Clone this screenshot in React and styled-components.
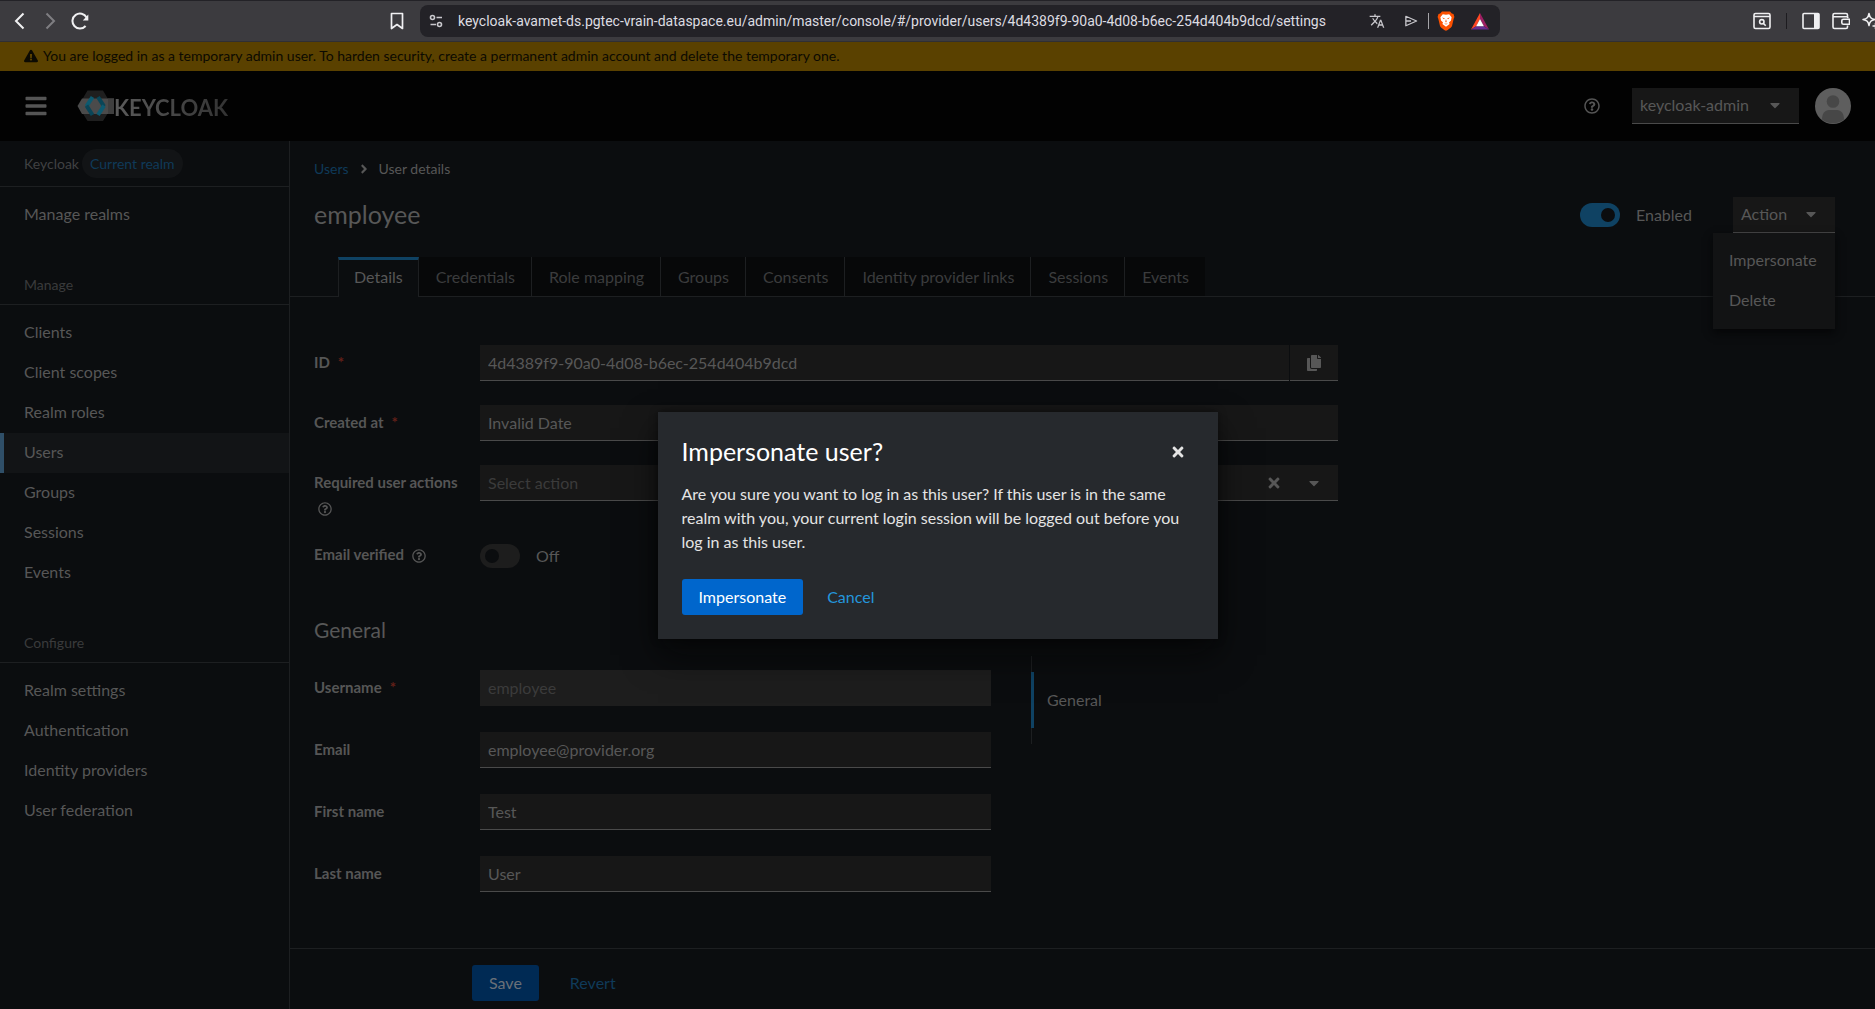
import React from 'react';
import styled, { createGlobalStyle } from 'styled-components';
import {
  FaExclamationTriangle,
  FaBars,
  FaAngleRight,
  FaCaretDown,
  FaTimes,
  FaCopy,
  FaRegQuestionCircle,
} from 'react-icons/fa';
import { MdTranslate } from 'react-icons/md';

const GlobalStyle = createGlobalStyle`
* {
  box-sizing: border-box;
}

body {
  margin: 0;
  background: #0b0d0f;
  color: #575757;
  font-family: Lato, "Open Sans", sans-serif;
  font-size: 16px;
  line-height: 24px;
}

button, input {
  font: inherit;
  color: inherit;
  border: 0;
  padding: 0;
  margin: 0;
  border-radius: 0;
  background: none;
}

a {
  text-decoration: none;
  color: inherit;
}

svg {
  display: block;
  flex: none;
}
`;

const Screen = styled.div`
  min-height: 100vh;
  display: flex;
  flex-direction: column;
`;

/* browser bar */

const BrowserBar = styled.div`
  height: 42px;
  display: flex;
  align-items: center;
  background: #3c3b3f;
  border-top: 1px solid #232227;
  border-bottom: 1px solid #302f33;
  overflow: hidden;
`;

const BarLeft = styled.div`
  flex: 1;
  display: flex;
  align-items: center;
  padding: 0 8px 0 5px;
`;

const BarRight = styled.div`
  flex: none;
  width: 386px;
  margin-right: -11px;
  display: flex;
  align-items: center;
  justify-content: flex-end;
`;

const BarButton = styled.button`
  width: 30px;
  height: 30px;
  display: flex;
  align-items: center;
  justify-content: center;
  flex: none;
  color: ${props => props.$dim ? '#7f7e82' : '#f0f0f2'};
  margin-left: ${props => props.$push ? 'auto' : '0'};
`;

const UrlBox = styled.div`
  flex: 0 1 1080px;
  height: 32px;
  display: flex;
  align-items: center;
  padding: 0 3px 0 8px;
  border-radius: 8px;
  background: #232227;
  color: #c9c8cd;
`;

const UrlInput = styled.input`
  flex: 1;
  min-width: 0;
  margin-left: 14px;
  font-family: Roboto, "Noto Sans", sans-serif;
  font-size: 14px;
  color: #dddce1;
  outline: none;
`;

const UrlButton = styled.button`
  width: 34px;
  height: 30px;
  display: flex;
  align-items: center;
  justify-content: center;
`;

const BarLine = styled.div`
  width: 1px;
  height: 16px;
  margin: 0 ${props => props.$gap || 0}px;
  background: ${props => props.$dark ? '#1d1c20' : '#a5a4a8'};
`;

/* console page */

const Console = styled.div`
  position: relative;
  flex: 1;
  display: flex;
  flex-direction: column;
`;

const Banner = styled.div`
  height: 29px;
  display: flex;
  align-items: center;
  gap: 5px;
  padding: 0 24px 2px;
  background: #5a4100;
  color: #0c0a02;
  font-size: 14px;
`;

const Header = styled.header`
  height: 70px;
  display: flex;
  align-items: center;
  padding: 0 24px;
  background: #020202;
`;

const MenuButton = styled.button`
  color: #555555;
  font-size: 24px;
`;

const Brand = styled.a`
  display: flex;
  align-items: center;
  margin-left: 29px;
`;

const BrandText = styled.span`
  padding-top: 3px;
  font-weight: 700;
  font-size: 22px;
  background: linear-gradient(90deg, #5a5a5a, #333333);
  background-clip: text;
  color: transparent;
`;

const HeaderTools = styled.div`
  margin-left: auto;
  display: flex;
  align-items: center;
`;

const IconButton = styled.button`
  display: flex;
  color: #555555;
  font-size: 16px;
  margin-right: ${props => props.$space ? '32px' : '0'};
`;

const MenuToggle = styled.button`
  height: 36px;
  display: flex;
  align-items: center;
  justify-content: space-between;
  width: ${props => props.$wide ? '167px' : '102px'};
  padding: 0 16px 1px 8px;
  background: #171717;
  border-bottom: 1px solid #4a4a4a;
`;

const Avatar = styled.svg`
  margin-left: 16px;
`;

const Body = styled.div`
  flex: 1;
  display: flex;
`;

const Sidebar = styled.nav`
  flex: none;
  width: 290px;
  border-right: 1px solid #1d1f21;
`;

const Realm = styled.div`
  height: 46px;
  display: flex;
  align-items: center;
  gap: 3px;
  padding-left: 24px;
  border-bottom: 1px solid #1d1f21;
  color: #404143;
  font-size: 14px;
`;

const RealmPill = styled.span`
  height: 29px;
  padding: 0 8px;
  border-radius: 15px;
  line-height: 29px;
  background: #121416;
  color: #0f3a59;
`;

const NavTitle = styled.h2`
  margin: 39px 0 0;
  padding: 0 0 9px 24px;
  border-bottom: 1px solid #1d1f21;
  color: #3a3b3c;
  font-size: 14px;
  font-weight: 400;
  line-height: 21px;
`;

const NavList = styled.ul`
  list-style: none;
  margin: 0;
  padding: 8px 0 0;
`;

const NavLink = styled.a`
  display: block;
  padding: 7px 24px 9px 20px;
  border-left: 4px solid ${props => props.$active ? '#2f4f68' : 'transparent'};
  background: ${props => props.$active ? '#121416' : 'transparent'};
`;

const Main = styled.main`
  flex: 1;
  min-width: 0;
  display: flex;
  flex-direction: column;
`;

const Crumbs = styled.div`
  display: flex;
  align-items: center;
  gap: 8px;
  padding: 16px 24px 0;
  font-size: 14px;

  a {
    color: #0f3a59;
  }
`;

const TitleRow = styled.div`
  display: flex;
  align-items: center;
  padding: 16px 40px 0 24px;
`;

const Title = styled.h1`
  margin: 0 auto 0 0;
  padding-bottom: 2px;
  font-size: 25px;
  font-weight: 400;
`;

const SwitchLabel = styled.label`
  display: flex;
  align-items: center;
  gap: 16px;
  margin-right: ${props => props.$space ? '41px' : '0'};
`;

const Switch = styled.input`
  appearance: none;
  width: 40px;
  height: 24px;
  padding: 5px;
  display: flex;
  border-radius: 12px;
  background: ${props => props.defaultChecked ? '#0f4263' : '#1d1d1d'};
  justify-content: ${props => props.defaultChecked ? 'flex-end' : 'flex-start'};

  &::before {
    content: '';
    width: 14px;
    height: 14px;
    border-radius: 7px;
    background: #0b0d0f;
  }
`;

const ActionBox = styled.div`
  position: relative;
`;

const ActionMenu = styled.ul`
  position: absolute;
  top: 36px;
  right: 0;
  width: 122px;
  margin: 0;
  padding: 8px 0;
  list-style: none;
  background: #121314;
  box-shadow: 0 4px 8px #050607;

  button {
    display: block;
    padding: 7px 16px 9px;
  }
`;

const Tabs = styled.div`
  display: flex;
  height: 40px;
  margin-top: 24px;
  padding-left: 48px;
  box-shadow: inset 0 -1px 0 #1d1f21;
`;

const Tab = styled.button`
  height: ${props => props.$active ? '40px' : '39px'};
  padding: ${props => props.$active ? '0 15px 4px' : '0 16px 0 17px'};
  color: ${props => props.$active ? '#575757' : '#3b3c3d'};
  background: ${props => props.$active ? '#0b0d0f' : '#070809'};
  border: solid #1d1f21;
  border-width: ${props => props.$active ? '0 1px' : '0 1px 0 0'};
  border-top: ${props => props.$active ? '3px solid #0f4263' : '0'};

  &:last-child {
    border-right: 0;
  }
`;

const FormArea = styled.form`
  padding: 48px 24px 56px;
`;

const Fields = styled.div`
  display: flex;
  flex-direction: column;
  max-width: ${props => props.$narrow ? '677px' : '1024px'};
  gap: ${props => props.$narrow ? '26px' : '24px'};
  flex: 1;
`;

const Field = styled.div`
  display: grid;
  grid-template-columns: 150px 1fr;
  column-gap: 16px;
  align-items: start;
`;

const FieldLabel = styled.div`
  display: flex;
  flex-wrap: wrap;
  align-items: center;
  column-gap: 8px;
  padding-top: ${props => props.$flat ? '0' : '7px'};
  font-size: 15px;
  font-weight: 700;
  line-height: 21px;
  color: #565656;
`;

const Star = styled.span`
  color: #642019;
`;

const HelpButton = styled(IconButton)`
  padding: ${props => props.$wrapped ? '9px 4px 4px' : '2px 0 0'};
  font-size: 14px;
`;

const InputBox = styled.div`
  height: 36px;
  display: flex;
  align-items: center;
`;

const TextInput = styled.input`
  flex: 1;
  min-width: 0;
  width: 100%;
  height: 36px;
  padding: 0 8px 1px;
  background: #171717;
  border-bottom: 1px solid #4a4a4a;
  outline: none;

  &::placeholder {
    color: #3b3b3b;
    opacity: 1;
  }

  &:disabled {
    background: #1d1d1d;
    border-bottom: 0;
    color: #3b3b3b;
  }
`;

const FieldButton = styled.button`
  height: 36px;
  width: ${props => props.$small ? '32px' : '48px'};
  display: flex;
  align-items: center;
  justify-content: center;
  background: #171717;
  border-bottom: 1px solid #4a4a4a;
  margin-left: ${props => props.$split ? '1px' : '0'};
`;

const SectionTitle = styled.h2`
  margin: 47px 0 25px;
  font-size: 21px;
  font-weight: 400;
  line-height: 30px;
`;

const Split = styled.div`
  display: flex;
  align-items: flex-start;
  gap: 40px;
`;

const Jump = styled.div`
  margin-top: -14px;
  padding: 16px 0;
  border-left: 1px solid #1d1f21;

  a {
    display: block;
    margin-left: -1px;
    padding: 16px 13px;
    border-left: 3px solid #0f4263;
  }
`;

const Footer = styled.div`
  margin-top: auto;
  padding: 16px 24px 8px 182px;
  border-top: 1px solid #1d1f21;
  display: flex;
`;

const Button = styled.button`
  height: 36px;
  padding: 0 17px 1px;
  border-radius: 3px;
  background: ${props => props.$link ? 'none' : props.$bright ? '#0066cc' : '#002a54'};
  color: ${props => props.$link
    ? (props.$bright ? '#2496dc' : '#0f3a59')
    : (props.$bright ? '#ffffff' : '#6a7078')};
  margin-left: ${props => props.$link ? (props.$bright ? '7px' : '14px') : '0'};
`;

/* modal */

const Overlay = styled.div`
  position: absolute;
  inset: 0;
  display: flex;
  align-items: center;
  justify-content: center;
`;

const Modal = styled.div`
  width: 560px;
  max-width: 100%;
  padding: 24px;
  background: #26292d;
  color: #e4e4e4;
  box-shadow: 0 16px 32px rgba(3, 3, 3, 0.6), 0 0 8px rgba(3, 3, 3, 0.4);
`;

const ModalHead = styled.div`
  display: flex;
  align-items: center;
  justify-content: space-between;
  height: 32px;
  margin-bottom: 14px;
  padding-right: 8px;

  h1 {
    margin: 0;
    padding-bottom: 2px;
    color: #ffffff;
    font-size: 25px;
    font-weight: 400;
  }
`;

const ModalText = styled.p`
  margin: 0 0 25px;
`;

const manageLinks = ['Clients', 'Client scopes', 'Realm roles', 'Users', 'Groups', 'Sessions', 'Events'];
const configureLinks = ['Realm settings', 'Authentication', 'Identity providers', 'User federation'];
const tabs = ['Details', 'Credentials', 'Role mapping', 'Groups', 'Consents', 'Identity provider links', 'Sessions', 'Events'];
const profileFields = [
  { id: 'username', label: 'Username', value: 'employee', required: true, disabled: true },
  { id: 'email', label: 'Email', value: 'employee@provider.org' },
  { id: 'firstName', label: 'First name', value: 'Test' },
  { id: 'lastName', label: 'Last name', value: 'User' },
];

function Nav({ items, active }) {
  return <NavList>
    {items.map(item => (
      <li key={item}><NavLink href="#" $active={item === active}>{item}</NavLink></li>
    ))}
  </NavList>;
}

function Browser() {
  const line = { fill: 'none', stroke: 'currentColor', strokeWidth: 2 };
  return <BrowserBar>
    <BarLeft>
      <BarButton aria-label="Back">
        <svg width="18" height="18" viewBox="0 0 18 18" {...line}><path d="M12.5 1.5L5 9l7.500 7.500" /></svg>
      </BarButton>
      <BarButton aria-label="Forward" $dim>
        <svg width="18" height="18" viewBox="0 0 18 18" {...line}><path d="M5.500 1.500L13 9l-7.500 7.500" /></svg>
      </BarButton>
      <BarButton aria-label="Reload">
        <svg width="18" height="18" viewBox="0 0 18 18" {...line}>
          <path d="M14.600 14a7.500 7.500 0 1 1 1-8.500" />
          <path d="M17.300 2.500v6h-5.500z" fill="currentColor" stroke="none" />
        </svg>
      </BarButton>
      <BarButton aria-label="Bookmark" $push>
        <svg width="14" height="18" viewBox="0 0 14 18" {...line} strokeWidth="1.700">
          <path d="M1.500 1.500h11v15L7 12.500l-5.500 4z" strokeLinejoin="round" />
        </svg>
      </BarButton>
    </BarLeft>
    <UrlBox>
      <svg width="16" height="16" viewBox="0 0 16 16" {...line} strokeWidth="1.600">
        <circle cx="4.500" cy="4.500" r="2" />
        <path d="M8.500 4.500H14M2.500 11.500H8" />
        <circle cx="11.500" cy="11.500" r="2" />
      </svg>
      <UrlInput
        aria-label="Address"
        readOnly
        value="keycloak-avamet-ds.pgtec-vrain-dataspace.eu/admin/master/console/#/provider/users/4d4389f9-90a0-4d08-b6ec-254d404b9dcd/settings"
      />
      <UrlButton aria-label="Translate"><MdTranslate size={16} /></UrlButton>
      <UrlButton aria-label="Share">
        <svg width="14" height="12" viewBox="0 0 16 14" {...line} strokeWidth="1.500">
          <path d="M2 1.500L14.500 7 2 12.500zM2 7h6" strokeLinejoin="round" />
        </svg>
      </UrlButton>
      <BarLine />
      <UrlButton aria-label="Shields">
        <svg width="18" height="20" viewBox="0 0 18 20">
          <path d="M5 .5h8l1.800 2 1.700.4.900 3-.7 1.800-1.700 7.300c-.4 1.500-4 3.900-6 4.800-2-.9-5.600-3.300-6-4.800L1.300 7.700.600 5.900l.9-3 1.700-.4z" fill="#fb5000" />
          <path d="M5.800 3.200L9 3.800l3.200-.6 2.400 3-.6 3.300-2 2 .6 1.600-3.600 2.700-3.600-2.700.6-1.600-2-2-.6-3.300z" fill="#fff" />
          <path d="M5 6.500l2.800.7-.8 1zM13 6.500l-2.800.7.800 1zM9 8l.7 2.800L9 11.500l-.7-.7zM7 12.500l2 1 2-1-2 .3z" fill="#fb5000" />
        </svg>
      </UrlButton>
      <UrlButton aria-label="Rewards">
        <svg width="18" height="17" viewBox="0 0 18 17">
          <path d="M9 0L0 16.500l5.200-3.200L9 6z" fill="#ff4724" />
          <path d="M9 0l9 16.500-5.200-3.200L9 6z" fill="#9e1f63" />
          <path d="M0 16.500h18l-5.200-3.200H5.200z" fill="#662d91" />
          <path d="M9 6l3.900 7.300H5.100z" fill="#fff" />
        </svg>
      </UrlButton>
    </UrlBox>
    <BarRight>
      <BarButton aria-label="Search tabs">
        <svg width="18" height="18" viewBox="0 0 18 18" {...line} strokeWidth="1.600">
          <rect x="1" y="1.500" width="16" height="15" rx="1.500" />
          <path d="M1 4.500h16M10.500 11.500l2.200 2.200" />
          <circle cx="8.800" cy="9.800" r="2.200" />
        </svg>
      </BarButton>
      <BarLine $dark $gap={9} />
      <BarButton aria-label="Side panel">
        <svg width="18" height="18" viewBox="0 0 18 18" {...line} strokeWidth="1.600">
          <rect x="1" y="1.500" width="16" height="15" rx="1" />
          <path d="M12 2h5v14h-5z" fill="currentColor" stroke="none" />
        </svg>
      </BarButton>
      <BarButton aria-label="Wallet">
        <svg width="18" height="18" viewBox="0 0 18 18" {...line} strokeWidth="1.600">
          <path d="M15.500 4.500V3c0-1-.5-1.500-1.500-1.500H2.500C1.500 1.500 1 2 1 3v12c0 1 .5 1.500 1.500 1.500H14c1 0 1.500-.5 1.500-1.500v-1.500M1 4.700h13.500c1 0 1.500.5 1.500 1.500" />
          <path d="M17.500 7.200h-6c-1.200 0-1.700.6-1.700 1.600v1.900c0 1 .5 1.600 1.700 1.600h6z" />
        </svg>
      </BarButton>
      <BarButton aria-label="Assistant">
        <svg width="20" height="18" viewBox="0 0 20 18" {...line} strokeWidth="1.500">
          <path d="M8 1.500c.8 4 2 5.200 6 6-4 .8-5.200 2-6 6-.8-4-2-5.200-6-6 4-.8 5.200-2 6-6z" strokeLinejoin="round" />
          <path d="M14.500 11v6M11.500 14h6" />
        </svg>
      </BarButton>
    </BarRight>
  </BrowserBar>;
}

function Top() {
  return <>
    <Banner>
      <FaExclamationTriangle size={14} />
      You are logged in as a temporary admin user. To harden security, create a permanent admin account and delete the temporary one.
    </Banner>
    <Header>
      <MenuButton aria-label="Global navigation"><FaBars /></MenuButton>
      <Brand href="#">
        <svg width="37" height="32" viewBox="0 0 37 32">
          <path d="M10.500 0.500h15.500l6.500 11v9L26 31H10.500L4 20.500v-9z" fill="#1f1f1f" />
          <path d="M5 8.500h32v15.500H5L0.500 16z" fill="#4b4b4b" />
          <path d="M31 8.500h6v15.500h-6z" fill="#3f3f3f" />
          <g fill="none" strokeWidth="4">
            <path d="M15.500 7L9.500 16.300" stroke="#0d5a70" />
            <path d="M9.500 15.700l6 9.300" stroke="#0a4557" />
            <path d="M21 7l6 9.300" stroke="#0a4557" />
            <path d="M27 15.700L21 25" stroke="#0d5a70" />
          </g>
        </svg>
        <BrandText>KEYCLOAK</BrandText>
      </Brand>
      <HeaderTools>
        <IconButton aria-label="Help" $space><FaRegQuestionCircle /></IconButton>
        <MenuToggle $wide>keycloak-admin <FaCaretDown /></MenuToggle>
        <Avatar width="36" height="36" viewBox="0 0 36 36">
          <circle cx="18" cy="18" r="18" fill="#5e5e5e" />
          <circle cx="18" cy="13.500" r="6.300" fill="#474747" />
          <path d="M7 31.500c0-6 3-9.500 7-9.500h8c4 0 7 3.500 7 9.500A18 18 0 0 1 7 31.500z" fill="#474747" />
        </Avatar>
      </HeaderTools>
    </Header>
  </>;
}

function Details() {
  return <FormArea>
    <Fields>
      <Field>
        <FieldLabel><label htmlFor="id">ID</label><Star>*</Star></FieldLabel>
        <InputBox>
          <TextInput id="id" readOnly value="4d4389f9-90a0-4d08-b6ec-254d404b9dcd" />
          <FieldButton type="button" aria-label="Copy" $split><FaCopy /></FieldButton>
        </InputBox>
      </Field>
      <Field>
        <FieldLabel><label htmlFor="created">Created at</label><Star>*</Star></FieldLabel>
        <TextInput id="created" readOnly value="Invalid Date" />
      </Field>
      <Field>
        <FieldLabel>
          <label htmlFor="actions">Required user actions</label>
          <HelpButton type="button" aria-label="Help" $wrapped><FaRegQuestionCircle /></HelpButton>
        </FieldLabel>
        <InputBox>
          <TextInput id="actions" placeholder="Select action" />
          <FieldButton type="button" aria-label="Clear" $small><FaTimes /></FieldButton>
          <FieldButton type="button" aria-label="Open"><FaCaretDown /></FieldButton>
        </InputBox>
      </Field>
      <Field>
        <FieldLabel $flat>
          <label htmlFor="verified">Email verified</label>
          <HelpButton type="button" aria-label="Help"><FaRegQuestionCircle /></HelpButton>
        </FieldLabel>
        <SwitchLabel><Switch type="checkbox" id="verified" /> Off</SwitchLabel>
      </Field>
    </Fields>
    <SectionTitle>General</SectionTitle>
    <Split>
      <Fields $narrow>
        {profileFields.map(field => (
          <Field key={field.id}>
            <FieldLabel>
              <label htmlFor={field.id}>{field.label}</label>
              {field.required && <Star>*</Star>}
            </FieldLabel>
            <TextInput id={field.id} defaultValue={field.value} disabled={field.disabled} />
          </Field>
        ))}
      </Fields>
      <Jump><a href="#">General</a></Jump>
    </Split>
  </FormArea>;
}

export default function App() {
  return <Screen>
    <GlobalStyle />
    <Browser />
    <Console>
      <Top />
      <Body>
        <Sidebar>
          <Realm>Keycloak <RealmPill>Current realm</RealmPill></Realm>
          <Nav items={['Manage realms']} />
          <NavTitle>Manage</NavTitle>
          <Nav items={manageLinks} active="Users" />
          <NavTitle>Configure</NavTitle>
          <Nav items={configureLinks} />
        </Sidebar>
        <Main>
          <Crumbs><a href="#">Users</a> <FaAngleRight /> <span>User details</span></Crumbs>
          <TitleRow>
            <Title>employee</Title>
            <SwitchLabel $space><Switch type="checkbox" defaultChecked /> Enabled</SwitchLabel>
            <ActionBox>
              <MenuToggle>Action <FaCaretDown /></MenuToggle>
              <ActionMenu>
                <li><button>Impersonate</button></li>
                <li><button>Delete</button></li>
              </ActionMenu>
            </ActionBox>
          </TitleRow>
          <Tabs>
            {tabs.map(tab => <Tab key={tab} $active={tab === 'Details'}>{tab}</Tab>)}
          </Tabs>
          <Details />
          <Footer>
            <Button>Save</Button>
            <Button $link>Revert</Button>
          </Footer>
        </Main>
      </Body>
      <Overlay>
        <Modal role="dialog">
          <ModalHead>
            <h1>Impersonate user?</h1>
            <button aria-label="Close"><FaTimes /></button>
          </ModalHead>
          <ModalText>
            Are you sure you want to log in as this user? If this user is in the same realm with you, your current login session will be logged out before you log in as this user.
          </ModalText>
          <Button $bright>Impersonate</Button>
          <Button $bright $link>Cancel</Button>
        </Modal>
      </Overlay>
    </Console>
  </Screen>;
}
